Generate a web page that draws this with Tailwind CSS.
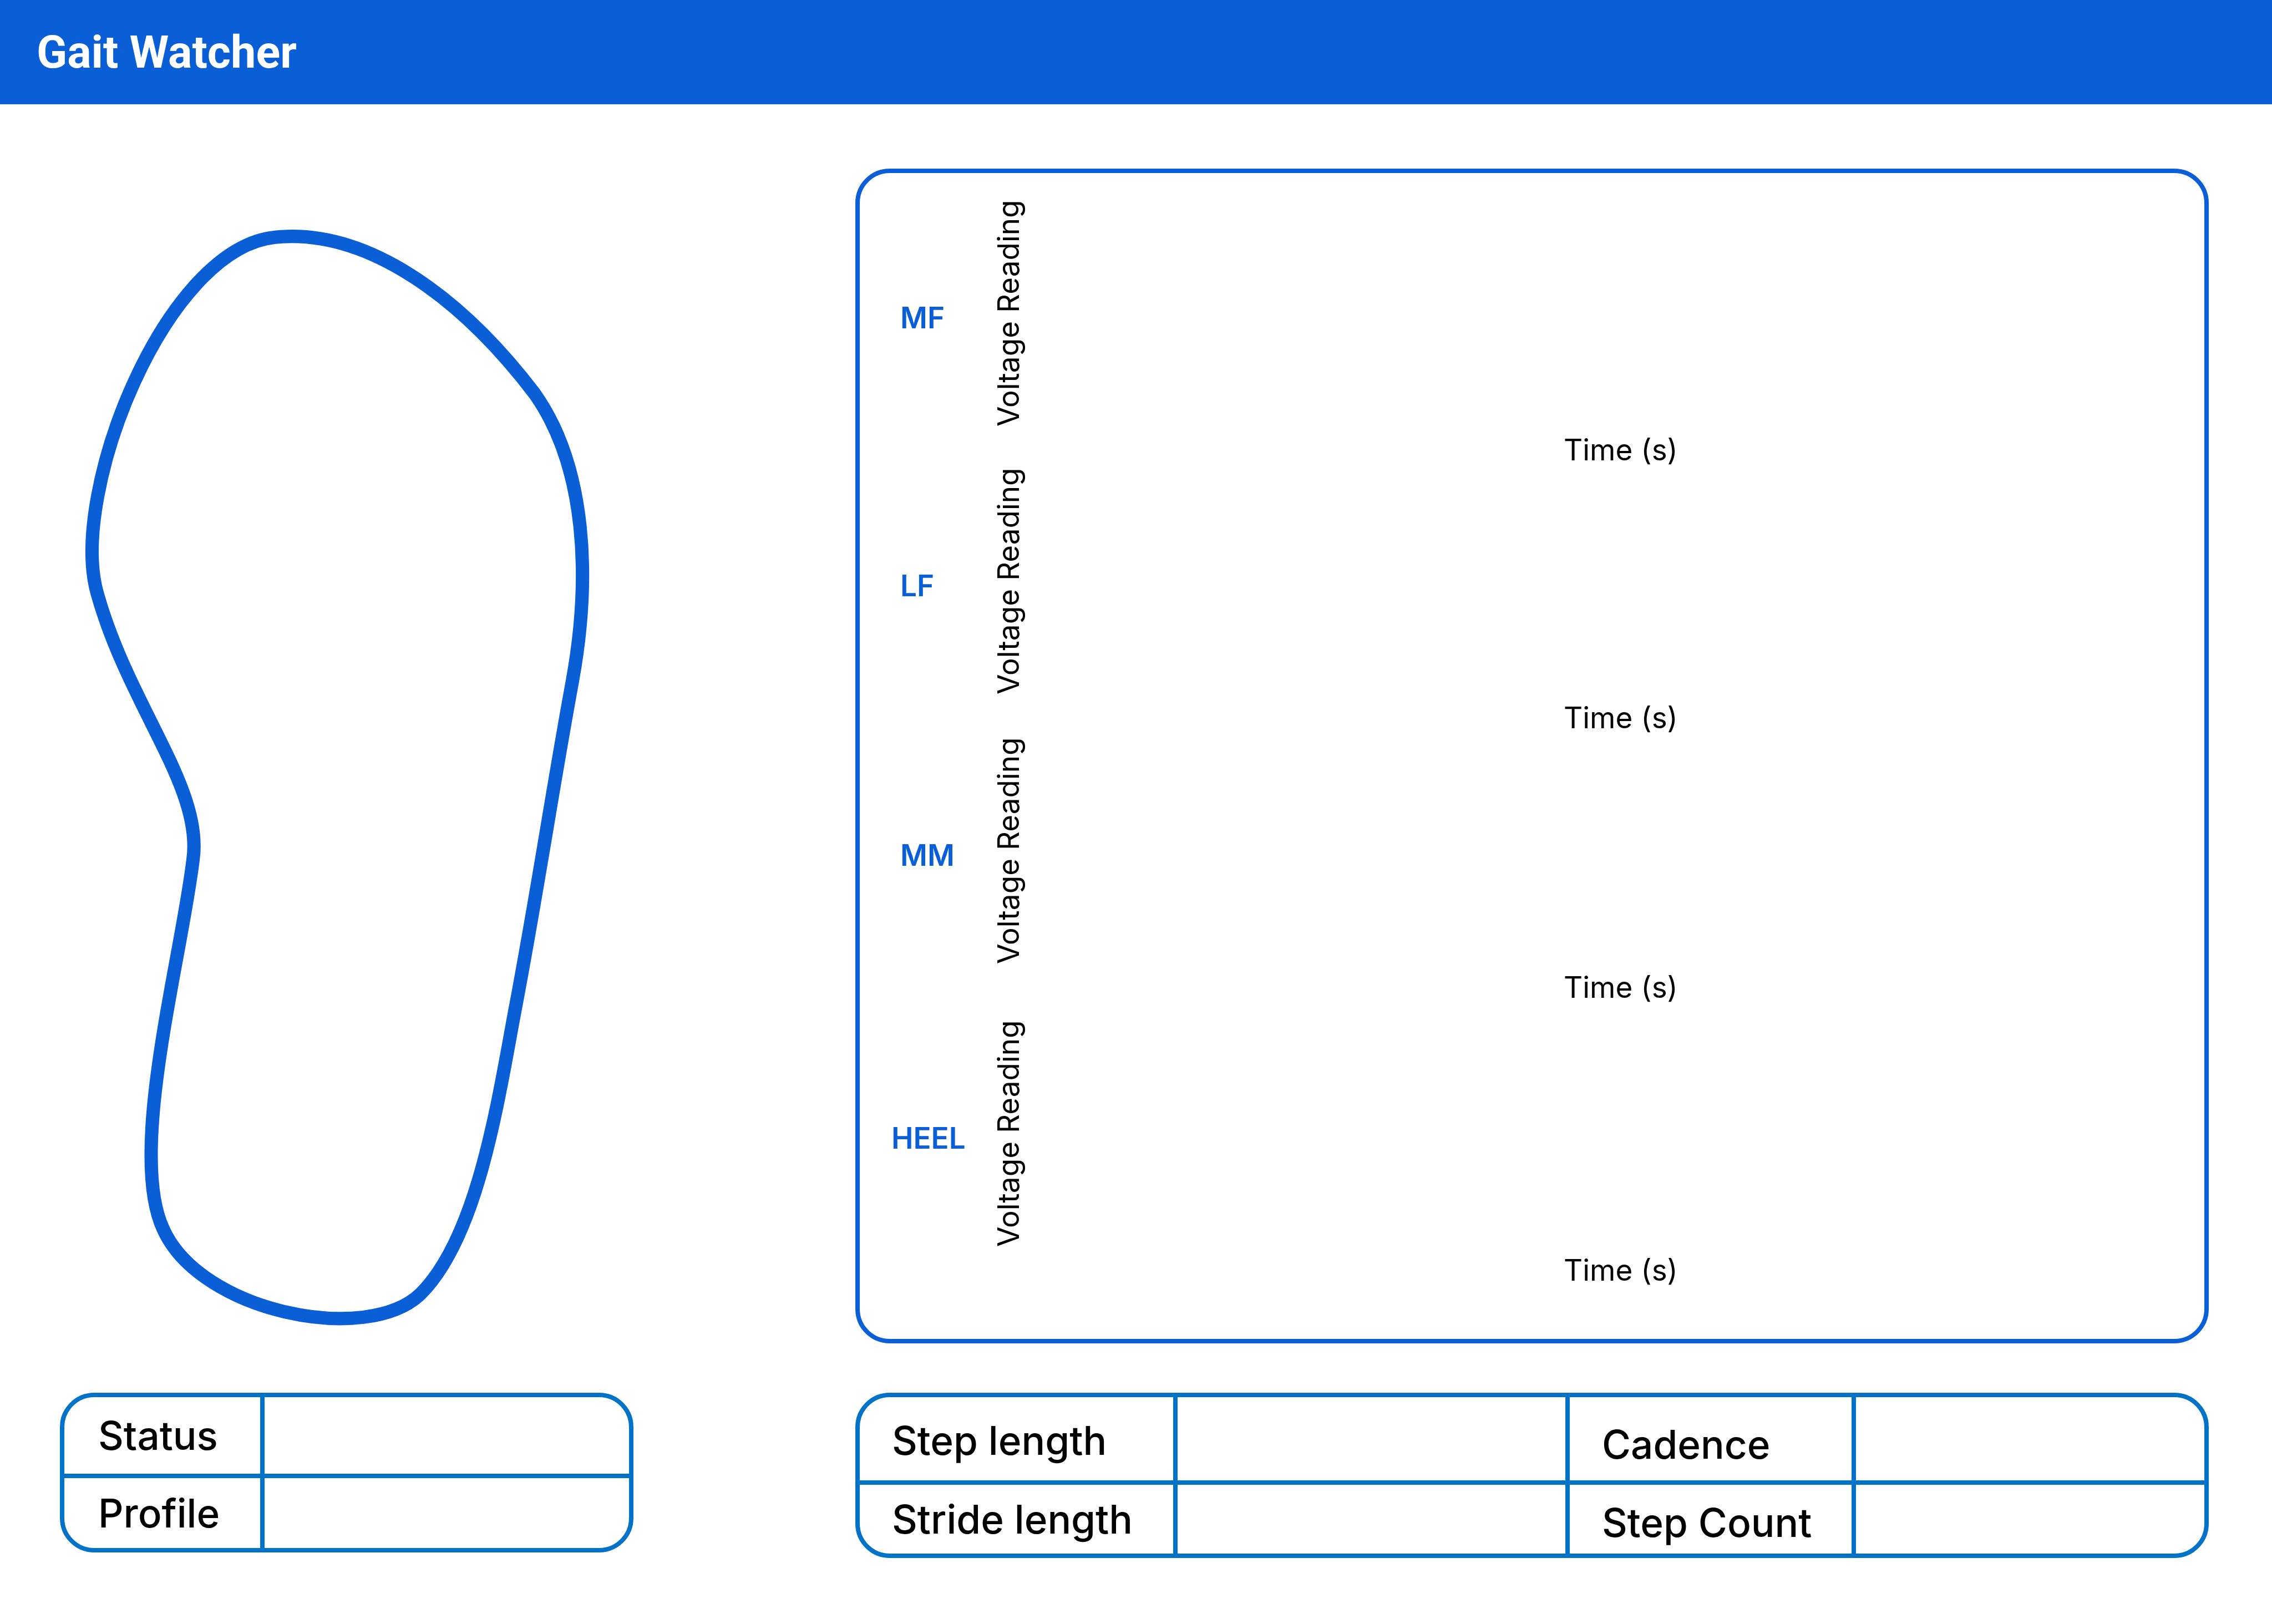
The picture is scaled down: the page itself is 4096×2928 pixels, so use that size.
<!DOCTYPE html>
<html lang="en">
<head>
<meta charset="utf-8">
<title>Gait Watcher</title>
<script src="https://cdn.jsdelivr.net/npm/@tailwindcss/browser@4"></script>
</head>
<body class="min-h-screen bg-white font-['Inter',sans-serif] text-black">
  <header class="flex h-[188px] items-center bg-[#0a5fd7] px-[66px]">
    <h1 class="font-['Roboto',sans-serif] text-[81px] leading-none font-bold text-white">Gait Watcher</h1>
  </header>

  <main class="grid grid-cols-[1034fr_2440fr] gap-x-[400px] gap-y-[89px] pt-[116px] pr-[114px] pb-[118px] pl-[108px]">
    <section class="pt-[110px] pb-[34px] pl-[46px]" aria-label="Foot pressure map">
      <svg class="h-auto w-[909px] overflow-visible" viewBox="75 94 1395 3030" fill="none" stroke="#0a5fd7" stroke-width="37" stroke-linejoin="round" aria-hidden="true">
        <path d="M107 1098C30 820 297 145 600 115C850 90 1110 275 1318 548C1462 752 1474 1060 1422 1345C1365 1655 1325 1930 1263 2256C1215 2515 1160 2880 1003 3038C855 3182 395 3090 291 2861C190 2650 341 2110 373 1835C400 1636 194 1412 107 1098Z"/>
      </svg>
    </section>

    <section class="grid grid-rows-[483px_486px_510px_1fr] rounded-[62px] border-8 border-[#0a5fd7] pt-[48px] pl-[57px]" aria-label="Sensor readings">
      <figure class="grid grid-cols-[179px_60px_1fr] grid-rows-[410px_1fr]">
        <figcaption class="self-center pt-[16px] pl-[16px] text-[53px] leading-[64px] font-semibold text-[#0a5fd7]">MF</figcaption>
        <span class="rotate-180 text-center text-[53px] leading-[64px] whitespace-nowrap [writing-mode:vertical-rl]">Voltage Reading</span>
        <span class="col-start-3 row-start-2 pt-[9px] pl-[24px] text-center text-[53px] leading-[64px]">Time (s)</span>
      </figure>
      <figure class="grid grid-cols-[179px_60px_1fr] grid-rows-[410px_1fr]">
        <figcaption class="self-center pt-[16px] pl-[16px] text-[53px] leading-[64px] font-semibold text-[#0a5fd7]">LF</figcaption>
        <span class="rotate-180 text-center text-[53px] leading-[64px] whitespace-nowrap [writing-mode:vertical-rl]">Voltage Reading</span>
        <span class="col-start-3 row-start-2 pt-[9px] pl-[24px] text-center text-[53px] leading-[64px]">Time (s)</span>
      </figure>
      <figure class="grid grid-cols-[179px_60px_1fr] grid-rows-[410px_1fr]">
        <figcaption class="self-center pt-[16px] pl-[16px] text-[53px] leading-[64px] font-semibold text-[#0a5fd7]">MM</figcaption>
        <span class="rotate-180 text-center text-[53px] leading-[64px] whitespace-nowrap [writing-mode:vertical-rl]">Voltage Reading</span>
        <span class="col-start-3 row-start-2 pt-[9px] pl-[24px] text-center text-[53px] leading-[64px]">Time (s)</span>
      </figure>
      <figure class="grid grid-cols-[179px_60px_1fr] grid-rows-[410px_1fr]">
        <figcaption class="self-center pt-[16px] text-[53px] leading-[64px] font-semibold text-[#0a5fd7]">HEEL</figcaption>
        <span class="rotate-180 text-center text-[53px] leading-[64px] whitespace-nowrap [writing-mode:vertical-rl]">Voltage Reading</span>
        <span class="col-start-3 row-start-2 pt-[9px] pl-[24px] text-center text-[53px] leading-[64px]">Time (s)</span>
      </figure>
    </section>

    <section class="self-start overflow-hidden rounded-[62px] border-8 border-[#0072c8]" aria-label="Session">
      <table class="w-full table-fixed border-separate border-spacing-0 text-left text-[71px] leading-[86px]">
        <colgroup><col class="w-[361px]"><col></colgroup>
        <tr class="h-[146px]">
          <th class="border-r-8 border-b-8 border-[#0072c8] p-0 pl-[61px] font-medium">Status</th>
          <td class="border-b-8 border-[#0072c8] p-0"></td>
        </tr>
        <tr class="h-[126px]">
          <th class="border-r-8 border-[#0072c8] p-0 pl-[61px] font-medium">Profile</th>
          <td class="p-0"></td>
        </tr>
      </table>
    </section>

    <section class="self-start overflow-hidden rounded-[62px] border-8 border-[#0072c8]" aria-label="Gait metrics">
      <table class="w-full table-fixed border-separate border-spacing-0 text-left text-[71px] leading-[86px]">
        <colgroup><col class="w-[573px]"><col class="w-[707px]"><col class="w-[516px]"><col></colgroup>
        <tr class="h-[158px]">
          <th class="border-r-8 border-b-8 border-[#0072c8] p-0 pt-[6px] pl-[58px] font-medium">Step length</th>
          <td class="border-r-8 border-b-8 border-[#0072c8] p-0"></td>
          <th class="border-r-8 border-b-8 border-[#0072c8] p-0 pt-[20px] pl-[58px] font-medium">Cadence</th>
          <td class="border-b-8 border-[#0072c8] p-0"></td>
        </tr>
        <tr class="h-[124px]">
          <th class="border-r-8 border-[#0072c8] p-0 pl-[58px] font-medium">Stride length</th>
          <td class="border-r-8 border-[#0072c8] p-0"></td>
          <th class="border-r-8 border-[#0072c8] p-0 pt-[12px] pl-[58px] font-medium">Step Count</th>
          <td class="p-0"></td>
        </tr>
      </table>
    </section>
  </main>
</body>
</html>
